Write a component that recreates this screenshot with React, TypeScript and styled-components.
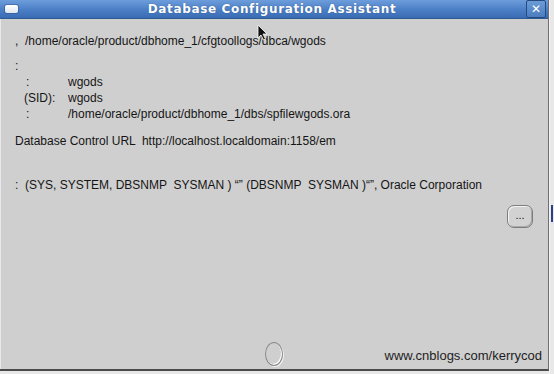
import React from "react";
import styled, { createGlobalStyle } from "styled-components";

const Global = createGlobalStyle`
  html, body { margin: 0; padding: 0; background: #e6e6e6; }
  body { font-family: "Liberation Sans", Arial, sans-serif; }
`;

const Screen = styled.div`
  position: relative;
  width: 554px;
  height: 374px;
  display: flex;
  background: #e8e8e8;
  overflow: hidden;
`;

const Window = styled.div`
  width: 548px;
  height: 369px;
  display: flex;
  flex-direction: column;
  border-right: 1px solid #6f6f6f;
  border-bottom: 2px solid #4a4a4a;
  background: #cfcfcf;
`;

const Outside = styled.div`
  flex: 1;
  display: flex;
  flex-direction: column;
  border-left: 1px solid #f4f4f4;
  padding-top: 205px;
`;

const Thumb = styled.div`
  width: 2px;
  height: 17px;
  margin-left: 1px;
  background: #2c3f8a;
`;

const TitleBar = styled.div`
  height: 19px;
  flex: none;
  display: flex;
  align-items: center;
  padding: 0 2px 0 5px;
  background: linear-gradient(#6d9ddb, #4a7ec5 55%, #3a6cb4);
  border-bottom: 1px solid #2f5a96;
  box-sizing: border-box;
`;

const MenuIcon = styled.div`
  width: 13px;
  height: 8px;
  border-radius: 2px;
  background: linear-gradient(#ffffff, #dfe6f0);
  box-shadow: 0 0 0 1px rgba(40, 70, 120, 0.4);
`;

const Title = styled.div`
  flex: 1;
  text-align: center;
  color: #ffffff;
  font-family: "DejaVu Sans", sans-serif;
  font-weight: bold;
  font-size: 12px;
  letter-spacing: 0.65px;
  text-shadow: 0 0 1px rgba(20, 40, 80, 0.6);
`;

const CloseBtn = styled.div`
  width: 18px;
  height: 16px;
  display: flex;
  align-items: center;
  justify-content: center;
  border: 1px solid #24497f;
  border-radius: 2px;
  background: linear-gradient(#6c9bd6, #4b7dc0);
  color: #fff;
  font-family: "DejaVu Sans", sans-serif;
  font-weight: bold;
  font-size: 12px;
  line-height: 1;
`;

const Body = styled.div`
  flex: 1;
  display: flex;
  flex-direction: column;
  padding: 14px 0 3px 14px;
  border-left: 1px solid #e8e8e8;
  color: #151515;
  font-size: 12px;
  line-height: 16px;
`;

const Line = styled.div<{ $gap?: number }>`
  margin-top: ${(p) => p.$gap ?? 0}px;
  white-space: pre;
`;

const KV = styled.div`
  display: grid;
  grid-template-columns: 53px auto;
`;

const Key = styled.span<{ $indent: number }>`
  padding-left: ${(p) => p.$indent}px;
  white-space: pre;
`;

const Val = styled.span`
  white-space: pre;
`;

const ButtonRow = styled.div`
  display: flex;
  justify-content: flex-end;
  margin-top: 12px;
  padding-right: 15px;
`;

const MoreButton = styled.div`
  width: 26px;
  height: 23px;
  display: flex;
  align-items: center;
  justify-content: center;
  border: 1px solid #7d7d7d;
  border-radius: 7px;
  background: #d2d2d2;
  box-shadow: inset 1px 1px 0 #f4f4f4, inset -1px -1px 0 #a9a9a9;
  font-size: 11px;
  line-height: 1;
  padding-bottom: 2px;
  box-sizing: border-box;
`;

const Footer = styled.div`
  margin-top: auto;
  display: grid;
  grid-template-columns: minmax(0, 1fr) auto minmax(0, 1fr);
  align-items: center;
  padding-right: 6px;
`;

const Oval = styled.div`
  grid-column: 2;
  width: 16px;
  height: 22px;
  border-radius: 50%;
  border: 1px solid #8a8a8a;
  box-shadow: inset -1px -1px 0 #ffffff, 1px 1px 0 #f2f2f2;
  margin-right: 9px;
`;

const Credit = styled.div`
  grid-column: 3;
  justify-self: end;
  font-size: 13px;
  color: #1e1e1e;
  padding-top: 4px;
  white-space: nowrap;
`;

const Cursor = styled.svg`
  position: absolute;
  left: 257px;
  top: 24px;
`;

export default function App() {
  return (
    <>
      <Global />
      <Screen>
        <Window>
          <TitleBar>
            <MenuIcon />
            <Title>Database Configuration Assistant</Title>
            <CloseBtn>✕</CloseBtn>
          </TitleBar>
          <Body>
            <Line>{",  /home/oracle/product/dbhome_1/cfgtoollogs/dbca/wgods"}</Line>
            <Line $gap={9}>:</Line>
            <KV>
              <Key $indent={11}>:</Key>
              <Val>wgods</Val>
              <Key $indent={9}>(SID):</Key>
              <Val>wgods</Val>
              <Key $indent={11}>:</Key>
              <Val>/home/oracle/product/dbhome_1/dbs/spfilewgods.ora</Val>
            </KV>
            <Line $gap={11}>{"Database Control URL  http://localhost.localdomain:1158/em"}</Line>
            <Line $gap={28}>{":  (SYS, SYSTEM, DBSNMP  SYSMAN ) \u201C\u201D (DBSNMP  SYSMAN )\u201C\u201D, Oracle Corporation"}</Line>
            <ButtonRow>
              <MoreButton>...</MoreButton>
            </ButtonRow>
            <Footer>
              <Oval />
              <Credit>www.cnblogs.com/kerrycod</Credit>
            </Footer>
          </Body>
        </Window>
        <Outside>
          <Thumb />
        </Outside>
        <Cursor width="12" height="17" viewBox="0 0 12 17">
          <path d="M1 1 L1 14 L4 11 L6.5 16 L8.5 15 L6 10 L10 10 Z" fill="#111" stroke="#fff" strokeWidth="0.8" />
        </Cursor>
      </Screen>
    </>
  );
}
